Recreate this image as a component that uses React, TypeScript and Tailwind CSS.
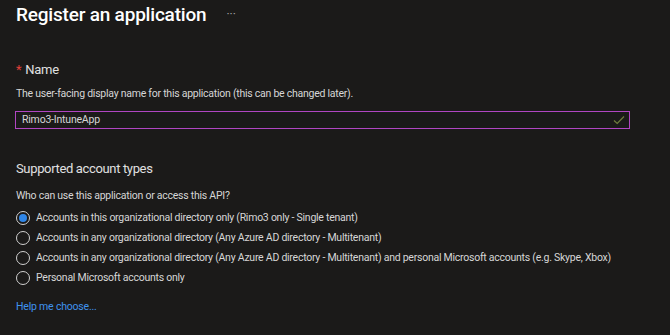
import React from 'react';

const options = [
  'Accounts in this organizational directory only (Rimo3 only - Single tenant)',
  'Accounts in any organizational directory (Any Azure AD directory - Multitenant)',
  'Accounts in any organizational directory (Any Azure AD directory - Multitenant) and personal Microsoft accounts (e.g. Skype, Xbox)',
  'Personal Microsoft accounts only',
];

export default function App() {
  return (
    <div className="w-[670px] h-[335px] overflow-hidden bg-[#1b1a19] text-[#d6d6d6] px-4 font-['Roboto',sans-serif]">
      <div className="flex items-center h-[31px] gap-[20px]">
        <h1 className="text-[19px] font-medium text-white tracking-[-0.2px]">Register an application</h1>
        <span className="text-[12px] text-[#a0a0a0] leading-none pb-1">···</span>
      </div>

      <div className="mt-[29px] text-[13px] leading-[20px] text-[#e0e0e0] tracking-[-0.3px]">
        <span className="text-[#e0403a] mr-1">*</span>Name
      </div>
      <p className="mt-[6px] text-[10.5px] leading-[16px] tracking-[-0.25px]">
        The user-facing display name for this application (this can be changed later).
      </p>
      <div className="mt-[9px] -ml-px w-[615px] h-[18px] border border-[#b146c2] flex items-center justify-between px-[6px]">
        <span className="text-[10.5px] tracking-[-0.2px]">Rimo3-IntuneApp</span>
        <svg width="12" height="10" viewBox="0 0 12 10" className="mr-[-2px]">
          <path d="M1 5.5 L4.2 8.5 L11 1.5" fill="none" stroke="#6f7d3c" strokeWidth="1.2" />
        </svg>
      </div>

      <h2 className="mt-[30px] text-[13px] leading-[20px] text-[#e0e0e0] tracking-[-0.35px]">Supported account types</h2>
      <p className="mt-[9px] text-[10.5px] leading-[16px] tracking-[-0.25px]">Who can use this application or access this API?</p>
      <div className="mt-[4px] flex flex-col">
        {options.map((o, i) => (
          <label key={i} className="flex items-center h-[20px] gap-[6px]">
            <span className="w-[14px] h-[14px] rounded-full border border-[#d0d0d0] flex items-center justify-center">
              {i === 0 && <span className="w-[8px] h-[8px] rounded-full bg-[#2f86e8]" />}
            </span>
            <span className="text-[10.5px] tracking-[-0.25px] whitespace-nowrap">{o}</span>
          </label>
        ))}
      </div>
      <a className="block mt-[11px] text-[10.5px] tracking-[-0.2px] text-[#3f92ee]">Help me choose...</a>
    </div>
  );
}
